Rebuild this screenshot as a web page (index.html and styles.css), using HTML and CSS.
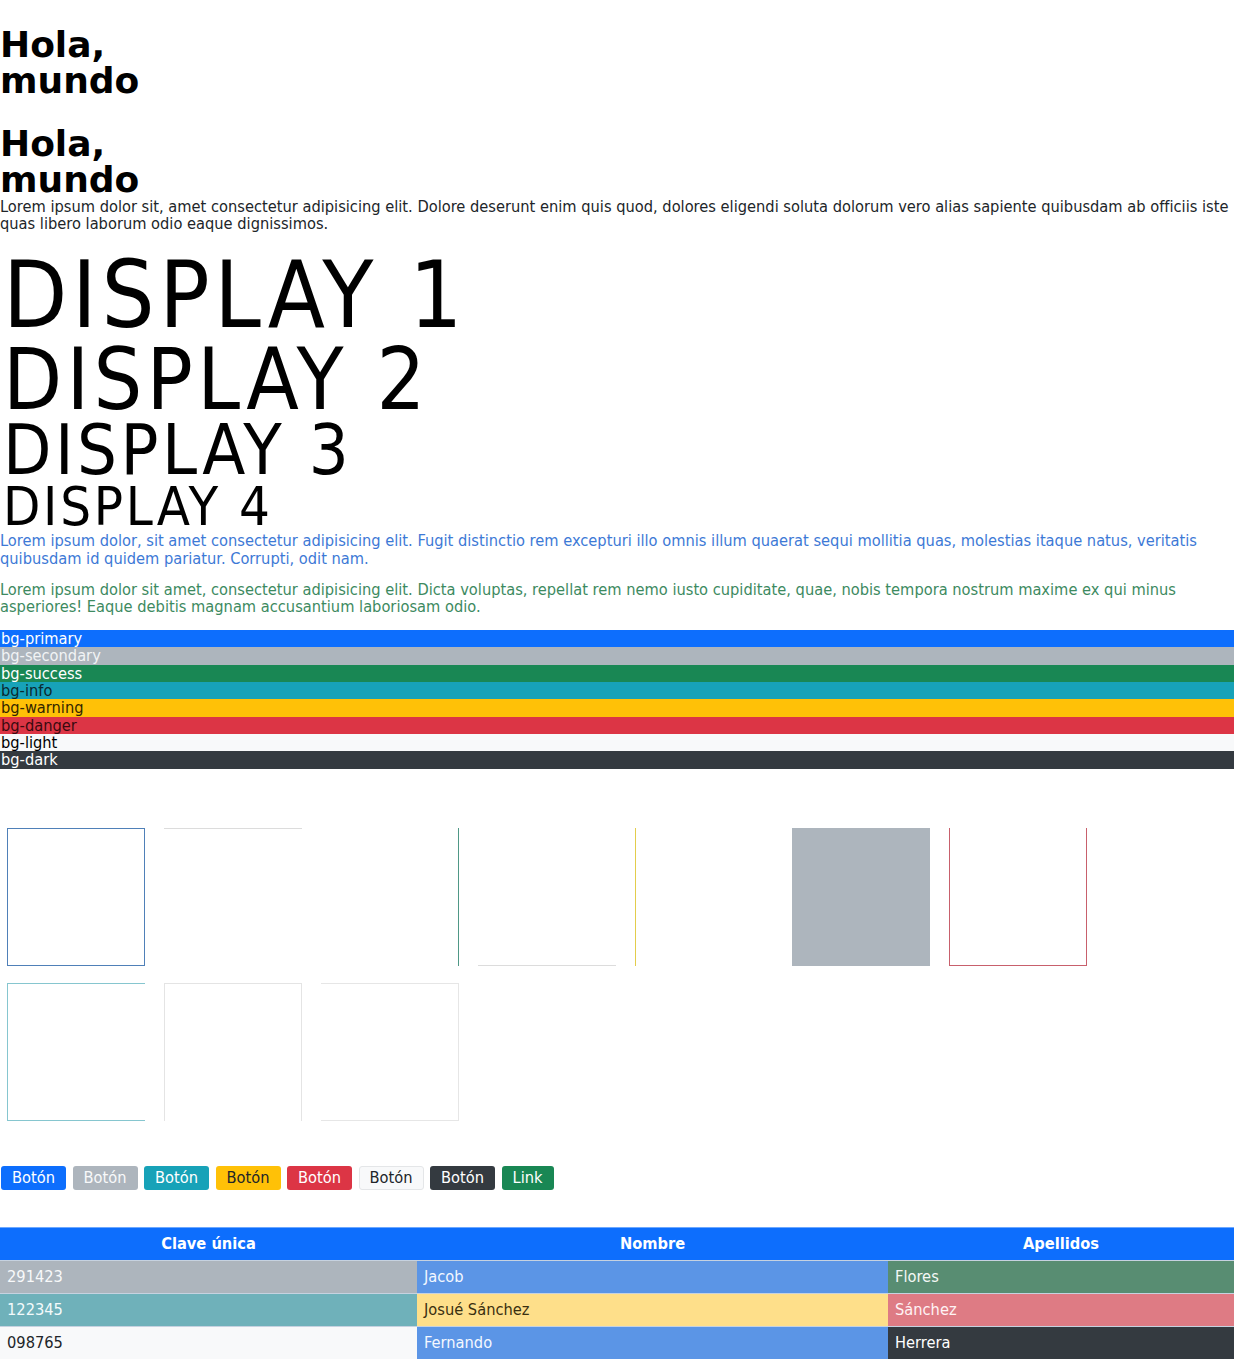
FILE: index.html
```html
<!DOCTYPE html>
<html lang="es">
<head>
<meta charset="utf-8">
<title>Bootstrap</title>
<link rel="stylesheet" href="styles.css">
</head>
<body>
<h1 class="hello">Hola, mundo</h1>
<h1 class="hello hello-second">Hola, mundo</h1>
<p class="text">Lorem ipsum dolor sit, amet consectetur adipisicing elit. Dolore deserunt enim quis quod, dolores eligendi soluta dolorum vero alias sapiente quibusdam ab officiis iste quas libero laborum odio eaque dignissimos.</p>
<h2 class="display display-1">DISPLAY 1</h2>
<h2 class="display display-2">DISPLAY 2</h2>
<h2 class="display display-3">DISPLAY 3</h2>
<h2 class="display display-4">DISPLAY 4</h2>
<p class="text text-blue">Lorem ipsum dolor, sit amet consectetur adipisicing elit. Fugit distinctio rem excepturi illo omnis illum quaerat sequi mollitia quas, molestias itaque natus, veritatis quibusdam id quidem pariatur. Corrupti, odit nam.</p>
<p class="text text-green">Lorem ipsum dolor sit amet, consectetur adipisicing elit. Dicta voluptas, repellat rem nemo iusto cupiditate, quae, nobis tempora nostrum maxime ex qui minus asperiores! Eaque debitis magnam accusantium laboriosam odio.</p>
<div class="bars">
  <div class="bar bar-primary">bg-primary</div>
  <div class="bar bar-secondary">bg-secondary</div>
  <div class="bar bar-success">bg-success</div>
  <div class="bar bar-info">bg-info</div>
  <div class="bar bar-warning">bg-warning</div>
  <div class="bar bar-danger">bg-danger</div>
  <div class="bar bar-light">bg-light</div>
  <div class="bar bar-dark">bg-dark</div>
</div>
<div class="boxes">
  <div class="box box-blue"></div>
  <div class="box box-top-gray"></div>
  <div class="box box-right-green"></div>
  <div class="box box-bottom-gray"></div>
  <div class="box box-left-yellow"></div>
  <div class="box box-filled"></div>
  <div class="box box-red"></div>
  <div class="box box-cyan"></div>
  <div class="box box-gray-a"></div>
  <div class="box box-gray-b"></div>
</div>
<div class="buttons">
  <button class="btn btn-primary">Botón</button>
  <button class="btn btn-secondary">Botón</button>
  <button class="btn btn-info">Botón</button>
  <button class="btn btn-warning">Botón</button>
  <button class="btn btn-danger">Botón</button>
  <button class="btn btn-light">Botón</button>
  <button class="btn btn-dark">Botón</button>
  <a class="btn btn-success" href="#">Link</a>
</div>
<table class="data">
  <colgroup>
    <col class="c1"><col class="c2"><col class="c3">
  </colgroup>
  <thead>
    <tr><th>Clave única</th><th>Nombre</th><th>Apellidos</th></tr>
  </thead>
  <tbody>
    <tr>
      <td class="cell-gray">291423</td>
      <td class="cell-blue">Jacob</td>
      <td class="cell-green">Flores</td>
    </tr>
    <tr>
      <td class="cell-teal">122345</td>
      <td class="cell-yellow">Josué Sánchez</td>
      <td class="cell-red">Sánchez</td>
    </tr>
    <tr>
      <td class="cell-light">098765</td>
      <td class="cell-blue">Fernando</td>
      <td class="cell-dark">Herrera</td>
    </tr>
  </tbody>
</table>
</body>
</html>
```
FILE: styles.css
```css
html, body {
  margin: 0;
  padding: 0;
  background: #fff;
}
body {
  font-family: "DejaVu Sans Condensed", "DejaVu Sans", sans-serif;
  font-stretch: condensed;
  font-size: 16.3px;
  line-height: 17.4px;
  color: #212529;
}
.hello {
  font-family: "DejaVu Sans", sans-serif;
  font-stretch: normal;
  font-weight: bold;
  font-size: 36px;
  line-height: 36px;
  width: 160px;
  margin: 27px 0 0 0;
  color: #000;
}
.text {
  margin: 0 0 14px;
}
.text-blue { color: #3d79d6; }
.text-green { color: #3d8a5f; }
.display {
  font-weight: normal;
  line-height: 0.93;
  letter-spacing: 0.05em;
  margin: 0 0 0 3px;
  color: #000;
}
.display-1 { font-size: 93px; margin-top: 19px; }
.display-2 { font-size: 85.5px; margin-top: 2px; }
.display-3 { font-size: 70px; margin-top: -2px; }
.display-4 { font-size: 54px; margin-top: -1px; }

.bars { margin-bottom: 59px; }
.bar { height: 17.4px; line-height: 17.4px; padding-left: 1px; }
.bar-primary { background: #0d6efd; color: #fff; }
.bar-secondary { background: #adb5bd; color: #f1f3f5; }
.bar-success { background: #198754; color: #fff; }
.bar-info { background: #17a2b8; color: #0b2a30; }
.bar-warning { background: #ffc107; color: #332600; }
.bar-danger { background: #dc3545; color: #3a0a0f; }
.bar-light { background: #f8f9fa; color: #000; }
.bar-dark { background: #343a40; color: #fff; }

.boxes {
  display: flex;
  flex-wrap: wrap;
  column-gap: 19px;
  row-gap: 17px;
  padding-left: 7px;
  margin-bottom: 45px;
}
.box {
  box-sizing: border-box;
  width: 138px;
  height: 138px;
}
.box-blue { border: 1px solid #4f80b8; }
.box-top-gray { border-top: 1px solid #dcdcdc; }
.box-right-green { border-right: 1px solid #4f9886; }
.box-bottom-gray { border-bottom: 1px solid #dcdcdc; }
.box-left-yellow { border-left: 1px solid #e3cd4c; }
.box-filled { background: #adb5bd; }
.box-red { border: 1px solid #c8606c; border-top: 0; }
.box-cyan { border: 1px solid #86c6cf; border-right: 0; }
.box-gray-a { border: 1px solid #e4e4e4; border-bottom: 0; }
.box-gray-b { border: 1px solid #e6e6e6; border-left: 0; }

.buttons {
  display: flex;
  gap: 6.5px;
  padding-left: 1px;
  margin-bottom: 37px;
}
.btn {
  font-family: "DejaVu Sans Condensed", "DejaVu Sans", sans-serif;
  font-stretch: condensed;
  font-size: 16.3px;
  line-height: 22px;
  height: 24px;
  box-sizing: border-box;
  padding: 0 10px;
  border: 1px solid transparent;
  border-radius: 3px;
  text-decoration: none;
  display: inline-flex;
  align-items: center;
  cursor: pointer;
}
.btn-primary { background: #0d6efd; color: #fff; }
.btn-secondary { background: #adb5bd; color: #f8f9fa; }
.btn-info { background: #17a2b8; color: #fff; }
.btn-warning { background: #ffc107; color: #212529; }
.btn-danger { background: #dc3545; color: #fff; }
.btn-light { background: #f8f9fa; color: #212529; border-color: #e4e6e8; }
.btn-dark { background: #343a40; color: #fff; }
.btn-success { background: #198754; color: #fff; }

.data {
  width: 100%;
  border-collapse: collapse;
  font-size: 16.3px;
}
.c1 { width: 417px; }
.c2 { width: 471px; }
.c3 { width: 346px; }
.data th {
  background: #0d6efd;
  color: #fff;
  font-weight: bold;
  height: 32px;
  padding: 0 7px;
  text-align: center;
  border-top: 1px solid #6ea8fe;
}
.data td {
  height: 32px;
  padding: 0 7px;
  border-top: 1px solid #c6d2e0;
}
.cell-gray { background: #adb5bd; color: #f8f9fa; }
.cell-blue { background: #5b95e6; color: #f4f8ff; }
.cell-green { background: #588d72; color: #f4f8f6; }
.cell-teal { background: #6fb1ba; color: #f4fbfc; }
.cell-yellow { background: #fedf8a; color: #3a2f10; }
.cell-red { background: #de7b84; color: #fff3f4; }
.cell-light { background: #f8f9fa; color: #212529; }
.cell-dark { background: #343a40; color: #fff; }
```
